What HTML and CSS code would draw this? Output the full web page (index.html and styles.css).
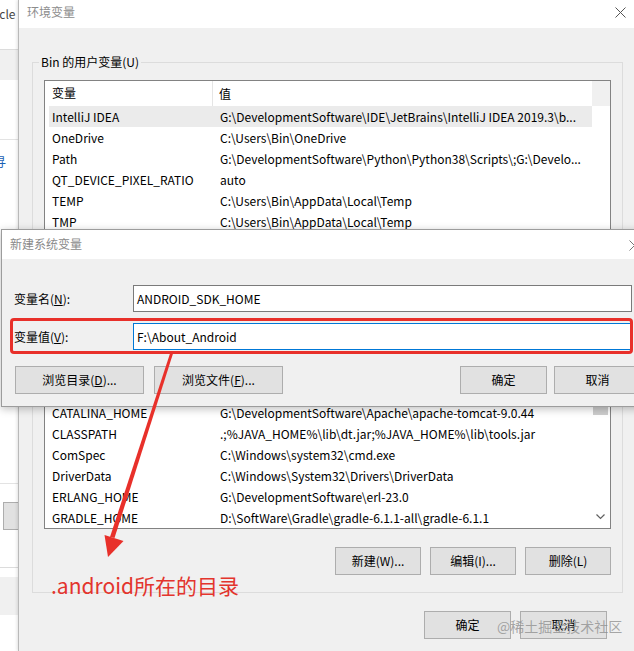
FILE: index.html
```html
<!DOCTYPE html>
<html lang="zh-CN">
<head>
<meta charset="utf-8">
<title>环境变量</title>
<link rel="stylesheet" href="styles.css">
</head>
<body>
<div class="desk">
  <div class="bgwin">
    <div class="bg-title">icle</div>
    <div class="bg-band"></div>
    <div class="bg-line1"></div>
    <div class="bg-glyph">寻</div>
    <div class="bg-line2"></div>
    <div class="bg-btn"></div>
    <div class="bg-line3"></div>
    <div class="bg-band2"></div>
  </div>

  <div class="envwin">
    <div class="titlebar">
      <span class="title">环境变量</span>
      <svg class="close" width="11" height="11" viewBox="0 0 11 11"><path d="M0.5 0.5 L10.5 10.5 M10.5 0.5 L0.5 10.5" stroke="#555" stroke-width="1" fill="none"/></svg>
    </div>
    <div class="envbody">
      <div class="group">
        <div class="legend"><span>Bin 的用户变量(U)</span></div>
        <div class="list">
          <div class="listmain">
            <div class="lhead"><span class="c1">变量</span><span class="c2">值</span></div>
            <div class="row sel"><span class="c1">IntelliJ IDEA</span><span class="c2">G:\DevelopmentSoftware\IDE\JetBrains\IntelliJ IDEA 2019.3\b...</span></div>
            <div class="row"><span class="c1">OneDrive</span><span class="c2">C:\Users\Bin\OneDrive</span></div>
            <div class="row"><span class="c1">Path</span><span class="c2">G:\DevelopmentSoftware\Python\Python38\Scripts\;G:\Develo...</span></div>
            <div class="row"><span class="c1">QT_DEVICE_PIXEL_RATIO</span><span class="c2">auto</span></div>
            <div class="row"><span class="c1">TEMP</span><span class="c2">C:\Users\Bin\AppData\Local\Temp</span></div>
            <div class="row"><span class="c1">TMP</span><span class="c2">C:\Users\Bin\AppData\Local\Temp</span></div>
            <div class="gap"></div>
            <div class="row"><span class="c1">CATALINA_HOME</span><span class="c2">G:\DevelopmentSoftware\Apache\apache-tomcat-9.0.44</span></div>
            <div class="row"><span class="c1">CLASSPATH</span><span class="c2">.;%JAVA_HOME%\lib\dt.jar;%JAVA_HOME%\lib\tools.jar</span></div>
            <div class="row"><span class="c1">ComSpec</span><span class="c2">C:\Windows\system32\cmd.exe</span></div>
            <div class="row"><span class="c1">DriverData</span><span class="c2">C:\Windows\System32\Drivers\DriverData</span></div>
            <div class="row"><span class="c1">ERLANG_HOME</span><span class="c2">G:\DevelopmentSoftware\erl-23.0</span></div>
            <div class="row"><span class="c1">GRADLE_HOME</span><span class="c2">D:\SoftWare\Gradle\gradle-6.1.1-all\gradle-6.1.1</span></div>
          </div>
          <div class="scroll">
            <div class="scroll-head"></div>
            <div class="scroll-track"><div class="thumb"></div></div>
            <svg class="arrow-dn" width="9" height="6" viewBox="0 0 9 6"><path d="M0.5 0.5 L4.5 4.5 L8.5 0.5" stroke="#606060" stroke-width="1.2" fill="none"/></svg>
          </div>
        </div>
        <div class="btnrow">
          <button class="btn">新建(W)...</button>
          <button class="btn">编辑(I)...</button>
          <button class="btn">删除(L)</button>
        </div>
      </div>
      <div class="footer">
        <button class="btn">确定</button>
        <button class="btn">取消</button>
      </div>
    </div>
  </div>

  <div class="modal">
    <div class="mtitlebar">
      <span class="mtitle">新建系统变量</span>
      <svg class="mclose" width="11" height="11" viewBox="0 0 11 11"><path d="M0.5 0.5 L10.5 10.5 M10.5 0.5 L0.5 10.5" stroke="#777" stroke-width="1" fill="none"/></svg>
    </div>
    <div class="mbody">
      <div class="field">
        <label class="flabel">变量名(<u>N</u>):</label>
        <div class="input">ANDROID_SDK_HOME</div>
      </div>
      <div class="field">
        <label class="flabel">变量值(<u>V</u>):</label>
        <div class="input focus">F:\About_Android</div>
      </div>
      <div class="mbtns">
        <button class="btn wide">浏览目录(<u>D</u>)...</button>
        <button class="btn wide second">浏览文件(<u>F</u>)...</button>
        <button class="btn ok">确定</button>
        <button class="btn cancel">取消</button>
      </div>
    </div>
  </div>

  <div class="redbox"></div>
  <svg class="arrow" width="634" height="651" viewBox="0 0 634 651">
    <polygon points="170.5,352 173.5,352 114.5,538 110,537" fill="#e8302a"/>
    <polygon points="108,557 104.5,535 123.5,541" fill="#e8302a"/>
  </svg>
  <div class="note">.android所在的目录</div>
  <div class="watermark">@稀土掘金技术社区</div>
</div>
</body>
</html>
```

FILE: styles.css
```css
* { box-sizing: border-box; }
html, body { margin: 0; padding: 0; }
body {
  width: 634px;
  height: 651px;
  overflow: hidden;
  background: #fff;
  font-family: "Noto Sans CJK SC", "Noto Sans", sans-serif;
  font-size: 12px;
  color: #000;
}
.desk { position: relative; width: 634px; height: 651px; overflow: hidden; }

/* background window on the far left */
.bgwin { position: absolute; left: 0; top: 0; width: 18px; height: 651px; background: #fff; overflow: hidden; }
.bg-title { position: absolute; left: -4px; top: 6px; color: #444; font-size: 12px; line-height: 16px; }
.bg-band { position: absolute; left: 0; top: 49px; width: 18px; height: 31px; background: #f0f0f0; border-top: 1px solid #dcdcdc; }
.bg-line1 { position: absolute; left: 0; top: 139px; width: 18px; height: 1px; background: #e3e3e3; }
.bg-glyph { position: absolute; left: -6px; top: 154px; color: #1a5fb4; font-size: 12px; line-height: 16px; }
.bg-line2 { position: absolute; left: 0; top: 483px; width: 18px; height: 1px; background: #e3e3e3; }
.bg-btn { position: absolute; left: 3px; top: 502px; width: 20px; height: 28px; background: #e1e1e1; border: 1px solid #adadad; }
.bg-line3 { position: absolute; left: 0; top: 567px; width: 18px; height: 1px; background: #dcdcdc; }
.bg-band2 { position: absolute; left: 0; top: 577px; width: 18px; height: 38px; background: #f0f0f0; }

/* environment variables dialog */
.envwin {
  position: absolute; left: 18px; top: 0; width: 630px; height: 651px;
  border-left: 1px solid #b9b9b9;
  box-shadow: -1px 0 3px rgba(0,0,0,0.12);
  display: flex; flex-direction: column;
}
.titlebar { height: 28px; background: #fff; display: flex; align-items: center; position: relative; }
.title { margin-left: 8px; color: #8c8c8c; font-size: 12px; line-height: 16px; margin-top: -4px; }
.close { position: absolute; left: 596px; top: 7px; }
.envbody { flex: 1; background: #f0f0f0; padding: 34px 0 0 13px; }
.group {
  width: 591px; height: 531px;
  border: 1px solid #dcdcdc;
  padding: 0 11px 0 11px;
}
.legend { height: 16px; margin-top: -9px; margin-left: -5px; line-height: 16px; }
.legend span { background: #f0f0f0; padding: 0 2px; }
.list {
  margin-top: 10px;
  width: 567px; height: 449px;
  border: 1px solid #828282;
  background: #fff;
  display: flex;
}
.listmain { width: 547px; overflow: hidden; }
.lhead { height: 25px; display: flex; align-items: center; }
.lhead .c1 { width: 168px; padding-left: 7px; border-right: 1px solid #e5e5e5; height: 25px; line-height: 24px; }
.lhead .c2 { padding-left: 6px; line-height: 24px; }
.row { height: 21px; line-height: 21px; display: flex; white-space: nowrap; margin-left: 4px; }
.row .c1 { width: 165px; padding-left: 3px; }
.row .c2 { padding-left: 6px; }
.row.sel { background: #ebebeb; }
.gap { height: 170px; }
.scroll { width: 18px; display: flex; flex-direction: column; position: relative; }
.scroll-head { height: 25px; background: #f0f0f0; }
.scroll-track { flex: 1; background: #fff; position: relative; }
.thumb { position: absolute; left: 1px; right: 2px; top: 175px; height: 134px; background: #cdcdcd; }
.arrow-dn { position: absolute; left: 4px; bottom: 8px; }

.btn {
  font-family: inherit; font-size: 12px; color: #000;
  height: 28px; width: 86px;
  background: #e1e1e1; border: 1px solid #adadad;
  padding: 0; margin: 0; line-height: 26px;
}
.btnrow { display: flex; justify-content: flex-end; gap: 9px; margin-top: 18px; }
.footer { display: flex; gap: 9px; margin-top: 18px; padding-left: 392px; }
.footer .btn { width: 87px; }

/* new system variable dialog */
.modal {
  position: absolute; left: 1px; top: 229px; width: 660px; height: 178px;
  border: 1px solid #9c9c9c;
  box-shadow: 0 2px 8px rgba(0,0,0,0.25);
  background: #f0f0f0;
  display: flex; flex-direction: column;
}
.mtitlebar { height: 29px; background: #fff; position: relative; display: flex; align-items: center; }
.mtitle { margin-left: 8px; color: #8a8a8a; line-height: 16px; margin-top: -1px; }
.mclose { position: absolute; left: 627px; top: 10px; }
.mbody { padding: 26px 0 0 12px; }
.field { display: flex; align-items: center; height: 27px; margin-bottom: 11px; }
.field + .mbtns { margin-top: 16px; }
.flabel { width: 119px; line-height: 16px; }
.flabel u { text-decoration: underline; }
.input {
  width: 499px; height: 27px;
  background: #fff; border: 1px solid #7a7a7a;
  padding-left: 3px; line-height: 25px; white-space: nowrap;
}
.input.focus { border-color: #0078d7; }
.mbtns { display: flex; padding-left: 1px; }
.mbtns .btn.wide { width: 129px; }
.mbtns .btn.second { margin-left: 10px; }
.mbtns .btn.ok { width: 87px; margin-left: 177px; }
.mbtns .btn.cancel { width: 87px; margin-left: 7px; }

/* annotations */
.redbox {
  position: absolute; left: 10px; top: 318px; width: 623px; height: 36px;
  border: 3px solid #e8302a; border-radius: 4px;
}
.arrow { position: absolute; left: 0; top: 0; pointer-events: none; }
.note {
  position: absolute; left: 51px; top: 572px;
  color: #e3352d; font-size: 21px; line-height: 26px;
}
.watermark {
  position: absolute; left: 497px; top: 616px;
  color: rgba(140,140,140,0.75); font-size: 14px; line-height: 20px;
}
```
